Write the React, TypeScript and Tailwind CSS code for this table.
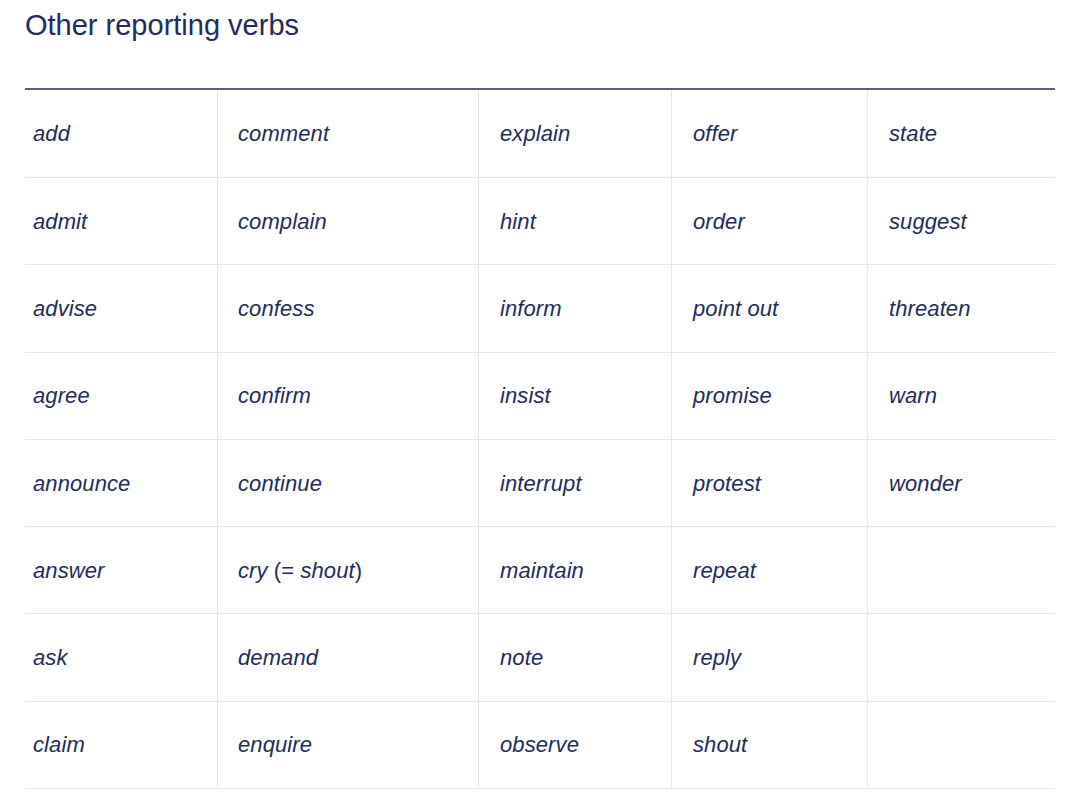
import React from "react";

const rows: (React.ReactNode | null)[][] = [
  ["add", "comment", "explain", "offer", "state"],
  ["admit", "complain", "hint", "order", "suggest"],
  ["advise", "confess", "inform", "point out", "threaten"],
  ["agree", "confirm", "insist", "promise", "warn"],
  ["announce", "continue", "interrupt", "protest", "wonder"],
  [
    "answer",
    <span>
      cry <span className="not-italic">(= </span>shout<span className="not-italic">)</span>
    </span>,
    "maintain",
    "repeat",
    null,
  ],
  ["ask", "demand", "note", "reply", null],
  ["claim", "enquire", "observe", "shout", null],
];

export default function App() {
  return (
    <div
      className="min-h-[800px] bg-white px-[25px] pt-[8px] text-[#222c59]"
      style={{ fontFamily: '"Liberation Sans", Arial, sans-serif' }}
    >
      <h2 className="text-[29px] leading-[35px] font-normal">Other reporting verbs</h2>
      <div className="mt-[45px] w-[1030px] border-t-2 border-[#596184]">
        {rows.map((r, i) => (
          <div
            key={i}
            className="grid grid-cols-[192px_261px_193px_196px_188px] border-b border-[#e8e8ec]"
          >
            {r.map((c, j) => (
              <div
                key={j}
                className={
                  "flex items-center text-[22px] tracking-[0.1px] italic " +
                  (i === 0 ? "h-[87px] " : "h-[86.3px] ") +
                  (j === 0 ? "pl-2" : j === 1 ? "border-l border-[#e8e8ec] pl-5" : "border-l border-[#e8e8ec] pl-[21px]")
                }
              >
                {c}
              </div>
            ))}
          </div>
        ))}
      </div>
    </div>
  );
}
